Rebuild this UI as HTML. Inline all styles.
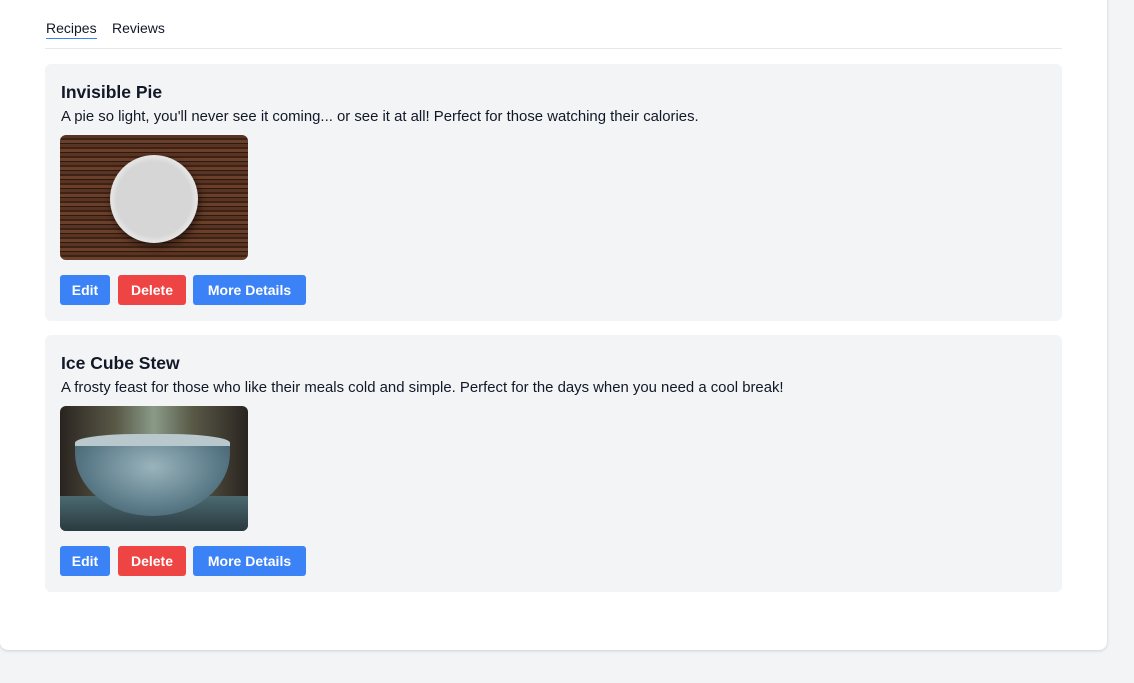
<!DOCTYPE html>
<html><head><style>
*{box-sizing:border-box;margin:0;padding:0}
body{width:1134px;height:683px;background:#f3f4f6;font-family:"Liberation Sans",sans-serif;color:#111827;position:relative;overflow:hidden}
.panel{position:absolute;left:0;top:-10px;width:1107px;height:660px;background:#fff;border-radius:8px;box-shadow:0 1px 3px rgba(0,0,0,.15)}
.tabs{position:absolute;left:45px;top:19px;width:1017px;height:30px;border-bottom:1px solid #e5e7eb;font-size:14px}
.tab{position:absolute;top:1px}
.t1{left:1px;border-bottom:1px solid #3b82f6;padding-bottom:2px}
.t2{left:67px}
.card{position:absolute;left:45px;width:1017px;height:257px;background:#f3f4f6;border-radius:6px}
.card h2{position:absolute;left:16px;top:18px;font-size:17.5px;font-weight:bold}
.card p{position:absolute;left:16px;top:45px;font-size:14.9px;white-space:nowrap}
.img{position:absolute;left:15px;top:71px;width:188px;height:125px;border-radius:6px;overflow:hidden}
.btn{position:absolute;top:211px;height:30px;line-height:30px;color:#fff;font-weight:bold;font-size:14px;text-align:center;border-radius:3px}
.b{background:#3b82f6}.r{background:#ef4444}
</style></head><body>
<div class="panel"></div>
<div class="tabs"><span class="tab t1">Recipes</span><span class="tab t2">Reviews</span></div>

<div class="card" style="top:64px">
<h2>Invisible Pie</h2>
<p>A pie so light, you'll never see it coming... or see it at all! Perfect for those watching their calories.</p>
<div class="img" style="background:repeating-linear-gradient(180deg,#5a3422 0 3px,#3e2215 3px 5px,#6b402a 5px 8px,#2e190f 8px 9px)">
<div style="position:absolute;left:50px;top:20px;width:88px;height:88px;border-radius:50%;background:radial-gradient(circle at 50% 50%,#d6d6d6 0 60%,#e4e4e4 68%,#c8c8c8 100%);box-shadow:2px 4px 8px rgba(0,0,0,.5)"></div>
</div>
<div class="btn b" style="left:15px;width:50px">Edit</div>
<div class="btn r" style="left:73px;width:68px">Delete</div>
<div class="btn b" style="left:148px;width:113px">More Details</div>
</div>

<div class="card" style="top:335px">
<h2>Ice Cube Stew</h2>
<p>A frosty feast for those who like their meals cold and simple. Perfect for the days when you need a cool break!</p>
<div class="img" style="background:linear-gradient(90deg,#2a2420 0%,#5a5a48 30%,#8a9a88 50%,#5a5a48 70%,#2a2420 100%)">
<div style="position:absolute;left:0;top:90px;width:188px;height:35px;background:linear-gradient(#4a6a70,#2a3a40)"></div>
<div style="position:absolute;left:15px;top:28px;width:155px;height:22px;border-radius:40%;background:#b8c8cc"></div>
<div style="position:absolute;left:15px;top:40px;width:155px;height:70px;border-radius:0 0 80px 80px/0 0 65px 65px;background:radial-gradient(ellipse at 50% 30%,#9ab4bc,#5a7a88 60%,#3a5060)"></div>
</div>
<div class="btn b" style="left:15px;width:50px">Edit</div>
<div class="btn r" style="left:73px;width:68px">Delete</div>
<div class="btn b" style="left:148px;width:113px">More Details</div>
</div>
</body></html>
